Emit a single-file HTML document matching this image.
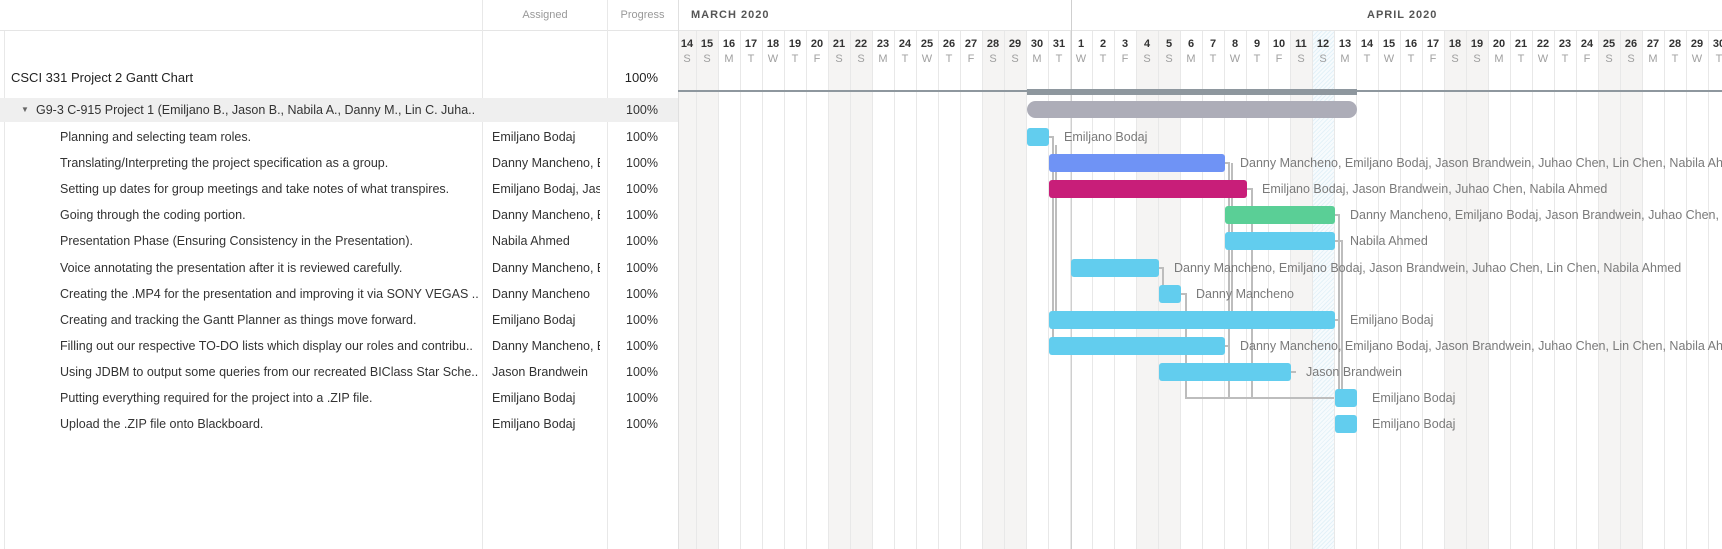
<!DOCTYPE html>
<html><head><meta charset="utf-8"><style>
*{margin:0;padding:0;box-sizing:border-box}
body{width:1722px;height:549px;overflow:hidden;background:#fff;font-family:"Liberation Sans",Arial,sans-serif;position:relative;color:#333}
.abs{position:absolute}
.cols{position:absolute;left:678px;top:31px;height:518px;display:flex}
.cols div{width:22px;flex:none;border-left:1px solid #e8e8e8;height:100%}
.cols div.f{width:18px;border-left:none}
.cols .w{background:#f5f4f3}
.cols .t{background:repeating-linear-gradient(135deg,#e3f1f8 0 1px,#f7fbfd 1px 3px)}
.days{position:absolute;left:678px;top:31px;display:flex}
.days div{width:22px;flex:none;text-align:center;font-size:11px;font-weight:bold;color:#333;line-height:14px;padding-top:6px}
.days div.f{width:18px}
.days div span{display:block;font-weight:normal;color:#a0a0a0;font-size:11px;margin-top:1px}
.row{position:absolute;left:0;width:678px;height:26px;font-size:12.5px;line-height:26px}
.row .n{position:absolute;left:60px;width:420px;white-space:nowrap;overflow:hidden}
.row .a{position:absolute;left:492px;width:108px;white-space:nowrap;overflow:hidden}
.row .p{position:absolute;right:20px}
.bar{position:absolute;height:18px;border-radius:3px;background:#62cdee}
.lab{position:absolute;font-size:12.5px;color:#7a7a7a;white-space:nowrap;line-height:18px}
</style></head><body>
<div class="cols">
<div class="f w"></div><div class="w"></div><div></div><div></div><div></div><div></div><div></div><div class="w"></div><div class="w"></div><div></div><div></div><div></div><div></div><div></div><div class="w"></div><div class="w"></div><div></div><div></div>
<div></div><div></div><div></div><div class="w"></div><div class="w"></div><div></div><div></div><div></div><div></div><div></div><div class="w"></div><div class="t"></div><div></div><div></div><div></div><div></div><div></div><div class="w"></div><div class="w"></div><div></div><div></div><div></div><div></div><div></div><div class="w"></div><div class="w"></div><div></div><div></div><div></div><div></div>
</div>
<div class="abs" style="left:0;top:0;width:1722px;height:31px;background:#fff;border-bottom:1px solid #e5e5e5"></div>
<div class="abs" style="left:678px;top:0;width:1px;height:549px;background:#e0e0e0"></div>
<div class="abs" style="left:1071px;top:0;width:1px;height:549px;background:#cfcfcf"></div>
<div class="abs" style="left:482px;top:0;width:1px;height:549px;background:#e8e8e8"></div>
<div class="abs" style="left:607px;top:0;width:1px;height:549px;background:#e8e8e8"></div>
<div class="abs" style="left:4px;top:31px;width:1px;height:518px;background:#e8e8e8"></div>
<div class="abs" style="left:483px;top:0;width:124px;text-align:center;font-size:11px;color:#999;line-height:31px">Assigned</div>
<div class="abs" style="left:607px;top:0;width:71px;text-align:center;font-size:11px;color:#999;line-height:31px">Progress</div>
<div class="abs" style="left:691px;top:0;font-size:11px;font-weight:bold;color:#555;letter-spacing:1px;line-height:31px">MARCH 2020</div>
<div class="abs" style="left:1367px;top:0;font-size:11px;font-weight:bold;color:#555;letter-spacing:1px;line-height:31px">APRIL 2020</div>
<div class="days">
<div class="f">14<span>S</span></div><div>15<span>S</span></div><div>16<span>M</span></div><div>17<span>T</span></div><div>18<span>W</span></div><div>19<span>T</span></div><div>20<span>F</span></div><div>21<span>S</span></div><div>22<span>S</span></div><div>23<span>M</span></div><div>24<span>T</span></div><div>25<span>W</span></div><div>26<span>T</span></div><div>27<span>F</span></div><div>28<span>S</span></div><div>29<span>S</span></div><div>30<span>M</span></div><div>31<span>T</span></div>
<div>1<span>W</span></div><div>2<span>T</span></div><div>3<span>F</span></div><div>4<span>S</span></div><div>5<span>S</span></div><div>6<span>M</span></div><div>7<span>T</span></div><div>8<span>W</span></div><div>9<span>T</span></div><div>10<span>F</span></div><div>11<span>S</span></div><div>12<span>S</span></div><div>13<span>M</span></div><div>14<span>T</span></div><div>15<span>W</span></div><div>16<span>T</span></div><div>17<span>F</span></div><div>18<span>S</span></div><div>19<span>S</span></div><div>20<span>M</span></div><div>21<span>T</span></div><div>22<span>W</span></div><div>23<span>T</span></div><div>24<span>F</span></div><div>25<span>S</span></div><div>26<span>S</span></div><div>27<span>M</span></div><div>28<span>T</span></div><div>29<span>W</span></div><div>30<span>T</span></div>
</div>
<div class="row" style="top:65px;font-size:13px;color:#222"><span style="position:absolute;left:11px">CSCI 331 Project 2 Gantt Chart</span><span class="p">100%</span></div>
<div class="row" style="top:98px;height:24px;line-height:24px;background:#efefef"><span style="position:absolute;left:21px;font-size:8px;color:#666">▼</span><span style="position:absolute;left:36px;width:440px;white-space:nowrap;overflow:hidden">G9-3 C-915 Project 1 (Emiljano B., Jason B., Nabila A., Danny M., Lin C. Juha...</span><span class="p">100%</span></div>
<div class="abs" style="left:678px;top:90px;width:1044px;height:2px;background:#8e979e"></div>
<div class="abs" style="left:1027px;top:89px;width:330px;height:6px;background:#8e979e"></div>
<div class="abs" style="left:1027px;top:101px;width:330px;height:17px;border-radius:9px;background:#adadb8"></div>
<div class="row" style="top:124px"><span class="n">Planning and selecting team roles.</span><span class="a">Emiljano Bodaj</span><span class="p">100%</span></div>
<div class="row" style="top:150px"><span class="n">Translating/Interpreting the project specification as a group.</span><span class="a">Danny Mancheno, Emiljano Bodaj</span><span class="p">100%</span></div>
<div class="row" style="top:176px"><span class="n">Setting up dates for group meetings and take notes of what transpires.</span><span class="a">Emiljano Bodaj, Jason</span><span class="p">100%</span></div>
<div class="row" style="top:202px"><span class="n">Going through the coding portion.</span><span class="a">Danny Mancheno, Emiljano</span><span class="p">100%</span></div>
<div class="row" style="top:228px"><span class="n">Presentation Phase (Ensuring Consistency in the Presentation).</span><span class="a">Nabila Ahmed</span><span class="p">100%</span></div>
<div class="row" style="top:255px"><span class="n">Voice annotating the presentation after it is reviewed carefully.</span><span class="a">Danny Mancheno, Emiljano</span><span class="p">100%</span></div>
<div class="row" style="top:281px"><span class="n">Creating the .MP4 for the presentation and improving it via SONY VEGAS ..</span><span class="a">Danny Mancheno</span><span class="p">100%</span></div>
<div class="row" style="top:307px"><span class="n">Creating and tracking the Gantt Planner as things move forward.</span><span class="a">Emiljano Bodaj</span><span class="p">100%</span></div>
<div class="row" style="top:333px"><span class="n">Filling out our respective TO-DO lists which display our roles and contribu..</span><span class="a">Danny Mancheno, Emiljano</span><span class="p">100%</span></div>
<div class="row" style="top:359px"><span class="n">Using JDBM to output some queries from our recreated BIClass Star Sche..</span><span class="a">Jason Brandwein</span><span class="p">100%</span></div>
<div class="row" style="top:385px"><span class="n">Putting everything required for the project into a .ZIP file.</span><span class="a">Emiljano Bodaj</span><span class="p">100%</span></div>
<div class="row" style="top:411px"><span class="n">Upload the .ZIP file onto Blackboard.</span><span class="a">Emiljano Bodaj</span><span class="p">100%</span></div>
<svg class="abs" style="left:0;top:0" width="1722" height="549">
<g stroke="#bdbdbd" stroke-width="2" fill="none">
<path d="M1049 137H1053V346"/><path d="M1056 145V320"/>
<path d="M1225 163H1229V398"/><path d="M1232 163V320"/>
<path d="M1247 189H1252V398"/>
<path d="M1335 215H1339V398"/><path d="M1335 241H1342V398"/>
<path d="M1159 268H1163V294"/>
<path d="M1181 294H1186V398H1334"/>
<path d="M1335 320H1340"/>
<path d="M1225 346H1229"/><path d="M1291 372H1296"/>
</g></svg>
<div class="bar" style="left:1027px;top:128px;width:22px"></div>
<div class="bar" style="left:1049px;top:154px;width:176px;background:#6f93f5"></div>
<div class="bar" style="left:1049px;top:180px;width:198px;background:#c81e79"></div>
<div class="bar" style="left:1225px;top:206px;width:110px;background:#5acf96"></div>
<div class="bar" style="left:1225px;top:232px;width:110px"></div>
<div class="bar" style="left:1071px;top:259px;width:88px"></div>
<div class="bar" style="left:1159px;top:285px;width:22px"></div>
<div class="bar" style="left:1049px;top:311px;width:286px"></div>
<div class="bar" style="left:1049px;top:337px;width:176px"></div>
<div class="bar" style="left:1159px;top:363px;width:132px"></div>
<div class="bar" style="left:1335px;top:389px;width:22px"></div>
<div class="bar" style="left:1335px;top:415px;width:22px"></div>
<div class="lab" style="left:1064px;top:128px">Emiljano Bodaj</div>
<div class="lab" style="left:1240px;top:154px">Danny Mancheno, Emiljano Bodaj, Jason Brandwein, Juhao Chen, Lin Chen, Nabila Ahmed</div>
<div class="lab" style="left:1262px;top:180px">Emiljano Bodaj, Jason Brandwein, Juhao Chen, Nabila Ahmed</div>
<div class="lab" style="left:1350px;top:206px">Danny Mancheno, Emiljano Bodaj, Jason Brandwein, Juhao Chen, Lin Chen</div>
<div class="lab" style="left:1350px;top:232px">Nabila Ahmed</div>
<div class="lab" style="left:1174px;top:259px">Danny Mancheno, Emiljano Bodaj, Jason Brandwein, Juhao Chen, Lin Chen, Nabila Ahmed</div>
<div class="lab" style="left:1196px;top:285px">Danny Mancheno</div>
<div class="lab" style="left:1350px;top:311px">Emiljano Bodaj</div>
<div class="lab" style="left:1240px;top:337px">Danny Mancheno, Emiljano Bodaj, Jason Brandwein, Juhao Chen, Lin Chen, Nabila Ahmed</div>
<div class="lab" style="left:1306px;top:363px">Jason Brandwein</div>
<div class="lab" style="left:1372px;top:389px">Emiljano Bodaj</div>
<div class="lab" style="left:1372px;top:415px">Emiljano Bodaj</div>
</body></html>
